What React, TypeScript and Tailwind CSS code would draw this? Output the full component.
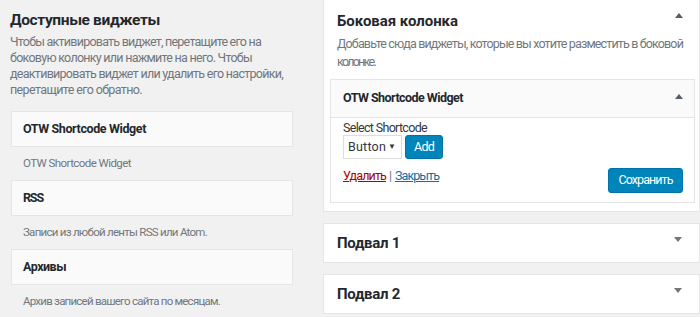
import React, { useLayoutEffect, useRef, useState } from "react";

const Fit = ({ w, children, className = "" }: { w: number; children: string; className?: string }) => {
  const ref = useRef<HTMLSpanElement>(null);
  const [ls, setLs] = useState(0);
  useLayoutEffect(() => {
    const el = ref.current;
    if (!el) return;
    el.style.letterSpacing = "0px";
    const nat = el.getBoundingClientRect().width;
    const n = (el.textContent || "").length;
    setLs((w - nat) / n);
  }, [w, children]);
  return (
    <span ref={ref} className={"inline-block whitespace-nowrap " + className} style={{ letterSpacing: ls + "px" }}>
      {children}
    </span>
  );
};

const Up = () => (
  <svg width="8" height="5" viewBox="0 0 8 5" className="block">
    <path d="M0 5 L4 0 L8 5 Z" fill="#555d66" />
  </svg>
);
const Down = () => (
  <svg width="8" height="5" viewBox="0 0 8 5" className="block">
    <path d="M0 0 L4 5 L8 0 Z" fill="#72777c" />
  </svg>
);

const Card = ({ title, tw, desc, dw }: { title: string; tw: number; desc: string; dw: number }) => (
  <div>
    <div className="h-[36px] bg-[#fafafa] border border-[#e5e5e5] flex items-center pl-[11px] text-[12.5px] font-bold text-[#23282d]">
      <Fit w={tw}>{title}</Fit>
    </div>
    <div className="h-[33px] pl-[12px] flex items-center text-[11.5px] text-[#72777c]">
      <Fit w={dw}>{desc}</Fit>
    </div>
  </div>
);

const Footer = ({ title }: { title: string }) => (
  <div className="h-[40px] bg-white border border-[#e5e5e5] flex items-center justify-between pl-[13px] pr-[17px]">
    <span className="text-[15px] font-bold text-[#23282d]">
      <Fit w={63}>{title}</Fit>
    </span>
    <span className="-mt-[8px]"><Down /></span>
  </div>
);

export default function App() {
  return (
    <div
      className="w-[700px] h-[317px] overflow-hidden bg-[#f1f1f1] flex"
      style={{ fontFamily: 'Roboto, "Noto Sans", sans-serif' }}
    >
      <div className="w-[323px] shrink-0 pl-[11px] pr-[30px]">
        <div className="h-[33px] pt-[9px] text-[15.5px] font-bold text-[#23282d] leading-[22px] -ml-[1px]">
          <Fit w={150}>Доступные виджеты</Fit>
        </div>
        <div className="text-[12.5px] leading-[16px] text-[#72777c] -ml-[1px] pt-[1px] h-[78px] flex flex-col items-start">
          <Fit w={251}>Чтобы активировать виджет, перетащите его на</Fit>
          <Fit w={242}>боковую колонку или нажмите на него. Чтобы</Fit>
          <Fit w={273}>деактивировать виджет или удалить его настройки,</Fit>
          <Fit w={132}>перетащите его обратно.</Fit>
        </div>
        <Card title="OTW Shortcode Widget" tw={123} desc="OTW Shortcode Widget" dw={108} />
        <Card title="RSS" tw={20} desc="Записи из любой ленты RSS или Atom." dw={184} />
        <Card title="Архивы" tw={43} desc="Архив записей вашего сайта по месяцам." dw={197} />
      </div>
      <div className="flex-1 min-w-0 flex flex-col gap-[11px]">
        <div className="bg-white border border-[#e5e5e5] border-t-0 h-[212px] pl-[6px] pr-[4px] overflow-hidden">
          <div className="flex justify-between items-start pl-[7px] pr-[12px] pt-[10px]">
            <span className="text-[15px] font-bold text-[#23282d] leading-[22px]">
              <Fit w={121}>Боковая колонка</Fit>
            </span>
            <span className="mt-[3px]"><Up /></span>
          </div>
          <div className="pl-[7px] text-[12.5px] leading-[18px] text-[#72777c] pt-[3px] h-[47px] flex flex-col items-start">
            <Fit w={346}>Добавьте сюда виджеты, которые вы хотите разместить в боковой</Fit>
            <Fit w={38}>колонке.</Fit>
          </div>
          <div className="border border-[#e5e5e5] h-[124px]">
            <div className="h-[38px] bg-[#fafafa] border-b border-[#e5e5e5] flex items-center justify-between pl-[12px] pr-[11px]">
              <span className="text-[12.5px] font-bold text-[#23282d]">
                <Fit w={120}>OTW Shortcode Widget</Fit>
              </span>
              <span className="-mt-[4px]"><Up /></span>
            </div>
            <div className="pl-[12px] pr-[11px]">
              <div className="text-[12.5px] text-[#32373c] leading-[17px] pt-[1px]">
                <Fit w={84}>Select Shortcode</Fit>
              </div>
              <div className="flex gap-[3px] -mt-[1px]">
                <div className="w-[59px] h-[24px] border border-[#ddd] bg-white flex items-center justify-between pl-[4px] pr-[5px] text-[12.5px] text-[#32373c]">
                  <Fit w={38}>Button</Fit>
                  <span className="text-[8px]">▼</span>
                </div>
                <div className="w-[38px] h-[24px] bg-[#0085ba] border border-[#0073aa] rounded-[3px] text-white text-[12.5px] flex items-center justify-center">
                  <Fit w={20}>Add</Fit>
                </div>
              </div>
              <div className="flex justify-between">
                <div className="text-[12.5px] mt-[9px] leading-[16px] flex items-baseline">
                  <Fit w={43} className="text-[#a00] underline">Удалить</Fit>
                  <span className="text-[#72777c] px-[3px]">|</span>
                  <Fit w={44} className="text-[#0073aa] underline">Закрыть</Fit>
                </div>
                <div className="mt-[9px] w-[75px] h-[25px] bg-[#0085ba] border border-[#0073aa] rounded-[3px] text-white text-[12.5px] flex items-center justify-center">
                  <Fit w={54}>Сохранить</Fit>
                </div>
              </div>
            </div>
          </div>
        </div>
        <Footer title="Подвал 1" />
        <Footer title="Подвал 2" />
      </div>
    </div>
  );
}
